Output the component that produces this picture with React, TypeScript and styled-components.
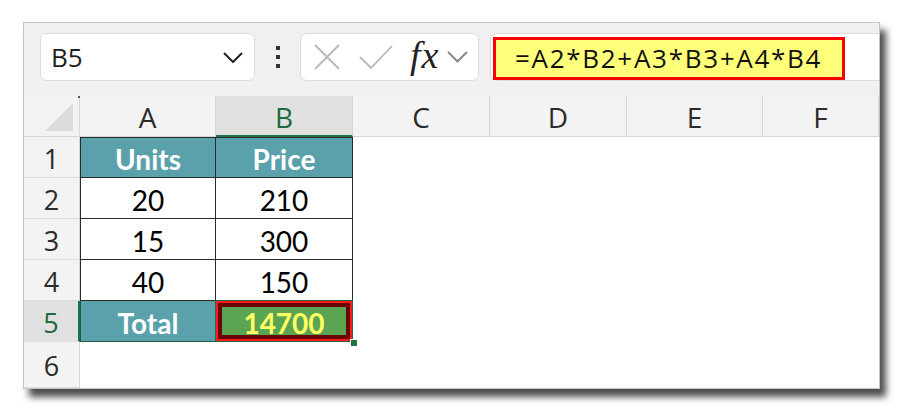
import React from "react";
import styled, { createGlobalStyle } from "styled-components";

const Global = createGlobalStyle`
  html, body {
    margin: 0;
    padding: 0;
    background: #ffffff;
  }
  * {
    box-sizing: border-box;
  }
`;

const Page = styled.div`
  width: 903px;
  height: 413px;
  padding: 22px 0 0 23px;
  background: #ffffff;
`;

const Frame = styled.div`
  width: 857px;
  height: 367px;
  display: flex;
  flex-direction: column;
  background: #ffffff;
  border: 1px solid #c4c4c4;
  box-shadow: 6px 8px 7px rgba(0, 0, 0, 0.7);
  overflow: hidden;
`;

const Toolbar = styled.div`
  height: 73px;
  flex: none;
  display: flex;
  align-items: flex-start;
  padding: 10px 0 0 16px;
  background: #f0f0f0;
  font-family: "Open Sans", "Noto Sans", sans-serif;
`;

const NameBox = styled.div`
  width: 215px;
  height: 48px;
  display: flex;
  align-items: center;
  justify-content: space-between;
  padding: 0 11px 0 10px;
  background: #ffffff;
  border: 1px solid #dcdcdc;
  border-radius: 7px;
  font-size: 26px;
  color: #1f1f1f;
`;

const Dots = styled.div`
  width: 45px;
  height: 48px;
  display: flex;
  flex-direction: column;
  align-items: center;
  justify-content: center;
  gap: 5px;

  span {
    width: 4px;
    height: 4px;
    background: #333333;
  }
`;

const FxBox = styled.div`
  width: 179px;
  height: 48px;
  display: flex;
  align-items: center;
  padding: 0 0 0 11px;
  background: #ffffff;
  border: 1px solid #dcdcdc;
  border-radius: 7px;
`;

const IconSlot = styled.div<{ $w: number }>`
  width: ${(p) => p.$w}px;
  height: 48px;
  display: flex;
  align-items: center;
  justify-content: center;
`;

const Fx = styled.span`
  font-family: "Liberation Serif", "DejaVu Serif", serif;
  font-style: italic;
  font-size: 38px;
  color: #222222;
  line-height: 1;
  letter-spacing: 1px;
  margin: 0 8px 5px 0;
`;

const FormulaBar = styled.div`
  flex: 1;
  height: 48px;
  margin-left: 11px;
  display: flex;
  align-items: center;
  padding-left: 2px;
  background: #ffffff;
  border: 1px solid #dcdcdc;
  border-right: none;
  border-radius: 7px 0 0 7px;
`;

const Formula = styled.div`
  width: 352px;
  height: 43px;
  margin-top: 2px;
  display: flex;
  align-items: center;
  padding-left: 19px;
  background: #ffff7a;
  border: 3px solid #ff0000;
  font-size: 26px;
  font-weight: 500;
  letter-spacing: 1.7px;
  color: #111111;
`;

const Sheet = styled.div`
  flex: 1;
  display: grid;
  grid-template-columns: 56px 136px 137px 137px 137px 136px 1fr;
  grid-template-rows: repeat(6, 41px) 1fr;
  font-family: "Open Sans", "Noto Sans", sans-serif;
`;

const Corner = styled.div`
  position: relative;
  background: #f3f3f3;
  border-right: 1px solid #d6d6d6;
  border-bottom: 1px solid #d6d6d6;

  &::before {
    content: "";
    position: absolute;
    right: 6px;
    bottom: 5px;
    width: 0;
    height: 0;
    border-left: 28px solid transparent;
    border-bottom: 28px solid #dcdcdc;
  }

  &::after {
    content: "";
    position: absolute;
    right: -1px;
    top: 0;
    width: 2px;
    height: 2px;
    background: #555555;
  }
`;

const ColHead = styled.div<{ $active?: boolean }>`
  display: flex;
  align-items: center;
  justify-content: center;
  font-size: 28px;
  color: ${(p) => (p.$active ? "#1e6b40" : "#2b2b2b")};
  background: ${(p) => (p.$active ? "#e1e1e1" : "#f3f3f3")};
  border-right: 1px solid #d6d6d6;
  border-bottom: ${(p) => (p.$active ? "2px solid #1e7145" : "1px solid #d6d6d6")};
  padding-top: ${(p) => (p.$active ? "3px" : "2px")};
`;

const RowHead = styled.div<{ $active?: boolean }>`
  display: flex;
  align-items: center;
  justify-content: center;
  font-size: 27px;
  padding-top: 2px;
  color: ${(p) => (p.$active ? "#1e6b40" : "#2b2b2b")};
  background: ${(p) => (p.$active ? "#e1e1e1" : "#f3f3f3")};
  border-bottom: 1px solid #dcdcdc;
  border-right: ${(p) => (p.$active ? "2px solid #1e7145" : "1px solid #d6d6d6")};
`;

const Cell = styled.div<{
  $fill?: string;
  $ink?: string;
  $bold?: boolean;
  $line?: string;
  $top?: boolean;
  $left?: boolean;
}>`
  display: flex;
  align-items: center;
  justify-content: center;
  padding-top: 3px;
  font-family: "Lato", "Open Sans", sans-serif;
  font-size: 28px;
  font-weight: ${(p) => (p.$bold ? 700 : 400)};
  color: ${(p) => p.$ink || "#000000"};
  background: ${(p) => p.$fill || "#ffffff"};
  border-right: ${(p) => (p.$line ? `1px solid ${p.$line}` : "none")};
  border-bottom: ${(p) => (p.$line ? `1px solid ${p.$line}` : "none")};
  border-top: ${(p) => (p.$line && p.$top ? `1px solid ${p.$line}` : "none")};
  border-left: ${(p) => (p.$line && p.$left ? `1px solid ${p.$line}` : "none")};
`;

const ActiveCell = styled.div`
  position: relative;
  margin: -1px 0 0 -1px;
  border: 1px solid #216a43;
  display: flex;
  font-family: "Lato", "Open Sans", sans-serif;
`;

const Marked = styled.div`
  flex: 1;
  display: flex;
  align-items: center;
  justify-content: center;
  padding-top: 3px;
  background: #5aa452;
  border: 2px solid #ff1a1a;
  box-shadow: inset 0 0 0 4px #6b0505;
  font-size: 28px;
  font-weight: 700;
  color: #ffff66;
`;

const Handle = styled.span`
  position: absolute;
  right: -6px;
  bottom: -6px;
  width: 8px;
  height: 8px;
  background: #217346;
  border: 1px solid #ffffff;
`;

const teal = "#5aa1ac";
const cols = ["A", "B", "C", "D", "E", "F"];
const rows = [
  ["Units", "Price"],
  ["20", "210"],
  ["15", "300"],
  ["40", "150"],
];

function Cross() {
  return (
    <svg width="28" height="28" viewBox="0 0 28 28">
      <path d="M2 2 L26 26 M26 2 L2 26" stroke="#b8b8b8" strokeWidth="1.8" fill="none" />
    </svg>
  );
}

function Tick() {
  return (
    <svg width="36" height="28" viewBox="0 0 36 28">
      <path d="M2 14 L13 25 L34 3" stroke="#b8b8b8" strokeWidth="1.8" fill="none" />
    </svg>
  );
}

function Chevron({ color, w }: { color: string; w: number }) {
  return (
    <svg width={w} height={w * 0.55} viewBox="0 0 20 11">
      <path d="M1 1 L10 10 L19 1" stroke={color} strokeWidth="2" fill="none" />
    </svg>
  );
}

export default function App() {
  return (
    <Page>
      <Global />
      <Frame>
        <Toolbar>
          <NameBox>
            <span>B5</span>
            <Chevron color="#222222" w={20} />
          </NameBox>
          <Dots>
            <span />
            <span />
            <span />
          </Dots>
          <FxBox>
            <IconSlot $w={30}>
              <Cross />
            </IconSlot>
            <IconSlot $w={68}>
              <Tick />
            </IconSlot>
            <Fx>fx</Fx>
            <Chevron color="#8a8a8a" w={21} />
          </FxBox>
          <FormulaBar>
            <Formula>=A2*B2+A3*B3+A4*B4</Formula>
          </FormulaBar>
        </Toolbar>
        <Sheet>
          <Corner />
          {cols.map((c) => (
            <ColHead key={c} $active={c === "B"}>
              {c}
            </ColHead>
          ))}

          {rows.map((r, i) => (
            <React.Fragment key={i}>
              <RowHead>{i + 1}</RowHead>
              {r.map((v, j) => (
                <Cell
                  key={j}
                  $line="#2a2a2a"
                  $top={i === 0}
                  $left={j === 0}
                  $fill={i === 0 ? teal : undefined}
                  $ink={i === 0 ? "#ffffff" : undefined}
                  $bold={i === 0}
                >
                  {v}
                </Cell>
              ))}
              <Cell />
              <Cell />
              <Cell />
              <Cell />
            </React.Fragment>
          ))}

          <RowHead $active>5</RowHead>
          <Cell $line="#25583a" $left $fill={teal} $ink="#ffffff" $bold>
            Total
          </Cell>
          <ActiveCell>
            <Marked>14700</Marked>
            <Handle />
          </ActiveCell>
          <Cell />
          <Cell />
          <Cell />
          <Cell />

          <RowHead>6</RowHead>
          <Cell />
          <Cell />
          <Cell />
          <Cell />
          <Cell />
          <Cell />
        </Sheet>
      </Frame>
    </Page>
  );
}
